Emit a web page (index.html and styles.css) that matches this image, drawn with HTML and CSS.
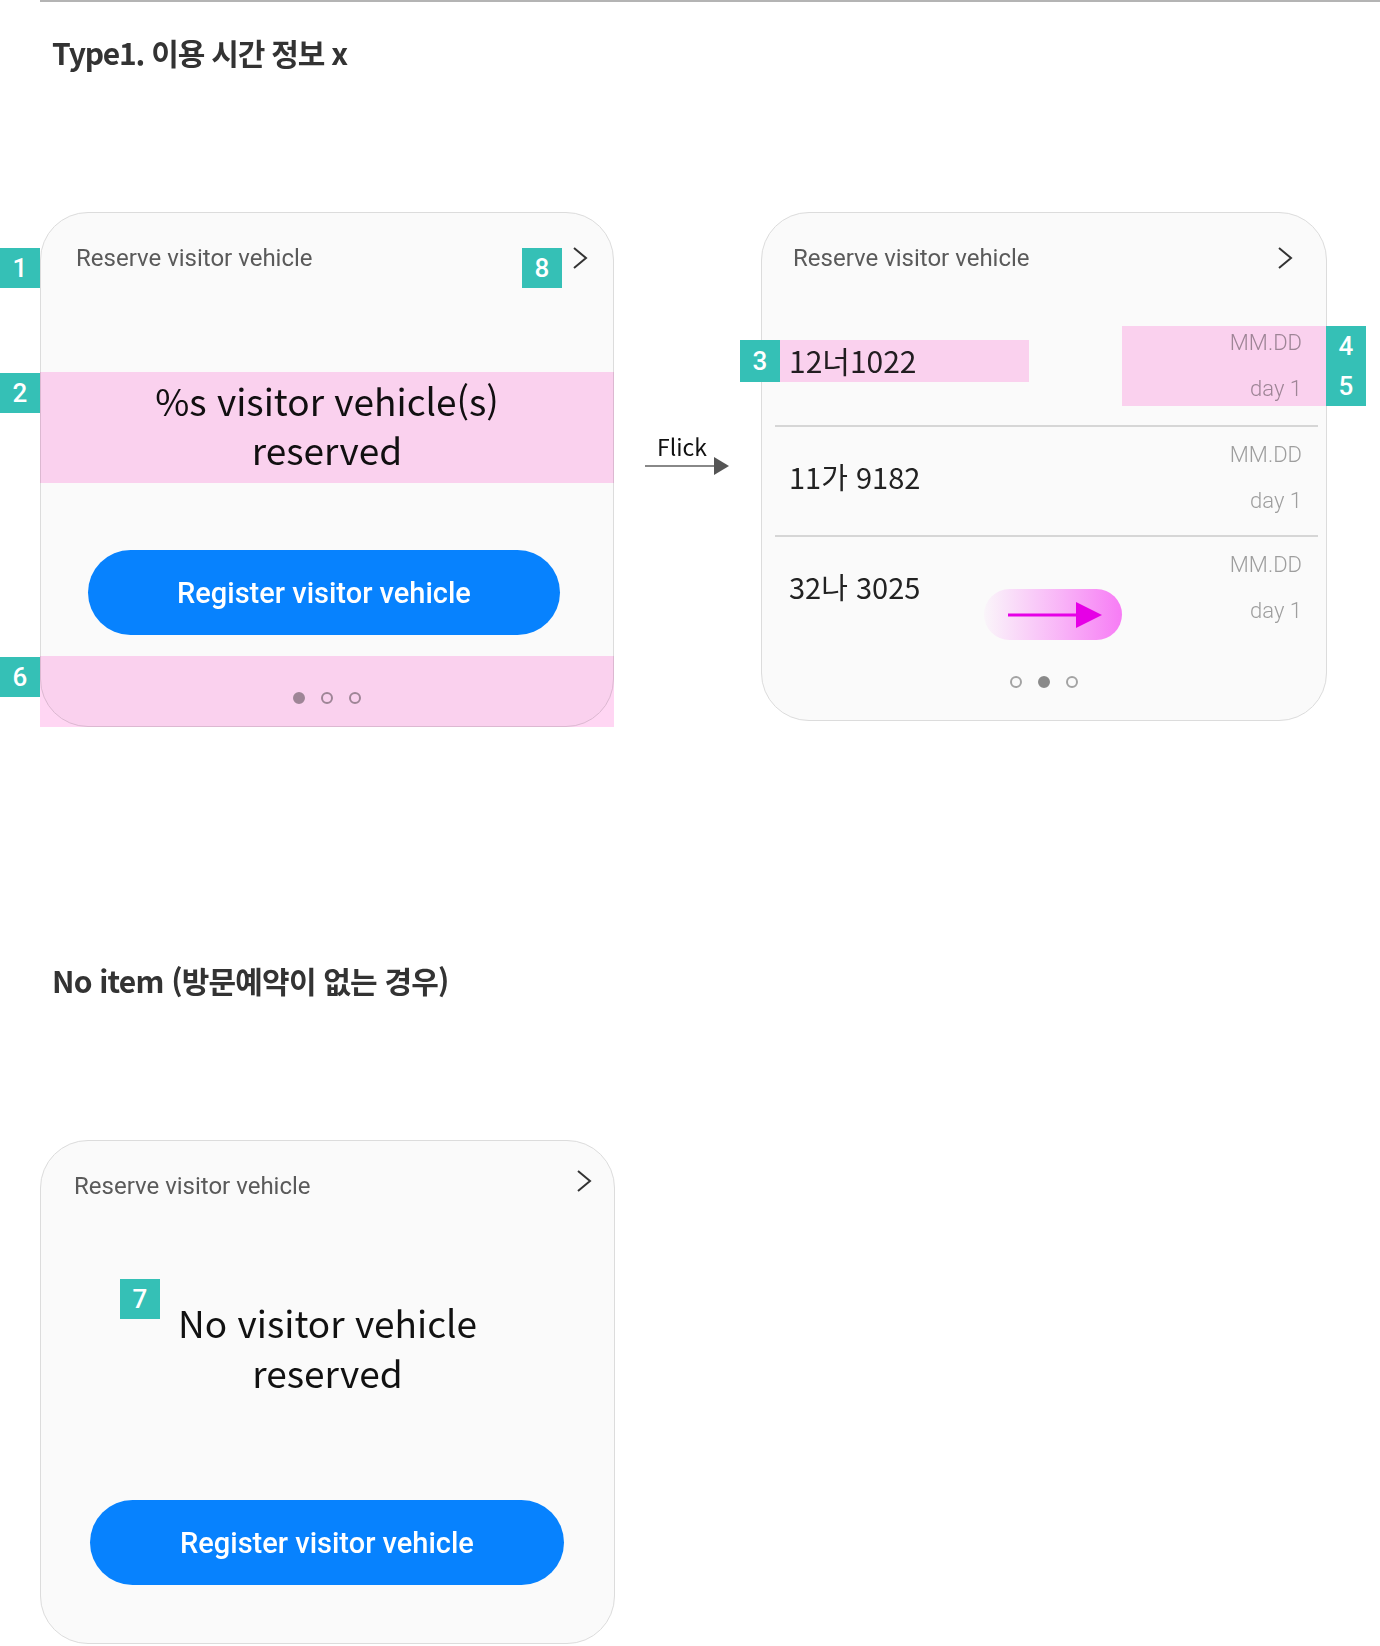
FILE: index.html
```html
<!DOCTYPE html>
<html lang="ko">
<head>
<meta charset="utf-8">
<title>Reserve visitor vehicle</title>
<link rel="stylesheet" href="styles.css">
</head>
<body>
<div class="rule"></div>
<h2 class="section-title">Type1. 이용 시간 정보 x</h2>

<div class="flow-row">
  <section class="card card-a">
    <header class="card-head head-a">
      <span class="card-title">Reserve visitor vehicle</span>
      <svg class="chev" width="16" height="24" viewBox="0 0 16 24"><polyline points="2,2 14,12 2,22" /></svg>
      <span class="badge b1">1</span>
      <span class="badge b8">8</span>
    </header>
    <div class="msg msg-a">
      <span class="mark mark-band"></span>
      <span class="badge b2">2</span>
      <span class="msg-line">%s visitor vehicle(s)</span>
      <span class="msg-line">reserved</span>
    </div>
    <button class="cta cta-a">Register visitor vehicle</button>
    <div class="pager pager-a">
      <span class="mark mark-foot"></span>
      <span class="badge b6">6</span>
      <span class="dot on"></span><span class="dot"></span><span class="dot"></span>
    </div>
  </section>

  <div class="flick">
    <span class="flick-label">Flick</span>
    <svg class="flick-arrow" width="84" height="20" viewBox="0 0 84 20"><line x1="0" y1="9" x2="70" y2="9" /><polygon points="69,0 84,9 69,18" /></svg>
  </div>

  <section class="card card-b">
    <header class="card-head head-b">
      <span class="card-title">Reserve visitor vehicle</span>
      <svg class="chev" width="16" height="24" viewBox="0 0 16 24"><polyline points="2,2 14,12 2,22" /></svg>
    </header>
    <div class="plates">
      <div class="plate-row first">
        <span class="mark mark-plate"></span>
        <span class="badge b3">3</span>
        <span class="mark mark-when"></span>
        <span class="badge b4">4</span>
        <span class="badge b5">5</span>
        <span class="plate">12너1022</span>
        <span class="when">MM.DD<br>day 1</span>
      </div>
      <div class="divider"></div>
      <div class="plate-row">
        <span class="plate">11가 9182</span>
        <span class="when">MM.DD<br>day 1</span>
      </div>
      <div class="divider"></div>
      <div class="plate-row">
        <span class="plate">32나 3025</span>
        <span class="swipe-hint">
          <svg width="138" height="51" viewBox="0 0 138 51"><line x1="24" y1="26" x2="94" y2="26" /><polygon points="92,13 118,26 92,39" /></svg>
        </span>
        <span class="when">MM.DD<br>day 1</span>
      </div>
    </div>
    <div class="pager pager-b">
      <span class="dot"></span><span class="dot on"></span><span class="dot"></span>
    </div>
  </section>
</div>

<h2 class="section-title title-empty">No item (방문예약이 없는 경우)</h2>

<section class="card card-c">
  <header class="card-head head-c">
    <span class="card-title">Reserve visitor vehicle</span>
    <svg class="chev chev-up" width="16" height="24" viewBox="0 0 16 24"><polyline points="2,2 14,12 2,22" /></svg>
  </header>
  <div class="msg msg-c">
    <span class="badge b7">7</span>
    <span class="msg-line">No visitor vehicle</span>
    <span class="msg-line">reserved</span>
  </div>
  <button class="cta cta-c">Register visitor vehicle</button>
</section>
</body>
</html>
```

FILE: styles.css
```css
* { box-sizing: border-box; }

body {
  margin: 0;
  width: 1380px;
  background: #ffffff;
  font-family: "Noto Sans CJK KR", "Noto Sans", sans-serif;
  color: #222;
}

.rule {
  margin-left: 40px;
  height: 2px;
  background: #b4b4b4;
}

.section-title {
  margin: 30px 0 0 52px;
  font-size: 30px;
  line-height: 40px;
  font-weight: 700;
  color: #333;
  letter-spacing: -1.2px;
}

.title-empty {
  margin-top: 233px;
  letter-spacing: -0.8px;
}

.flow-row {
  display: flex;
  align-items: flex-start;
  margin: 140px 0 0 40px;
}

.card {
  position: relative;
  background: #fafafa;
  border: 1px solid #dcdcdc;
  border-radius: 48px;
}

.card-a { width: 574px; }
.card-b { width: 566px; margin-left: 32px; }
.card-c { width: 575px; margin: 140px 0 0 40px; padding-bottom: 58px; }

.card-head {
  position: relative;
  height: 90px;
  display: flex;
  align-items: center;
}

.head-a { padding: 0 25px 0 35px; }
.head-b { padding: 0 33px 0 31px; }
.head-c { padding: 0 22px 0 33px; }

.card-title {
  font-family: Roboto, "Noto Sans", sans-serif;
  font-size: 24px;
  color: #5a5a5a;
}

.chev {
  margin-left: auto;
  fill: none;
  stroke: #333;
  stroke-width: 2;
}

.chev-up { margin-bottom: 10px; }

.badge {
  position: absolute;
  z-index: 2;
  width: 40px;
  height: 40px;
  display: flex;
  align-items: center;
  justify-content: center;
  background: #35c0b6;
  color: #fff;
  font-family: Roboto, "Noto Sans", sans-serif;
  font-size: 26px;
  font-weight: 500;
  line-height: 1;
}

.b1 { left: -41px; top: 35px; }
.b8 { left: 481px; top: 35px; }
.b2 { left: -41px; top: 1px; }
.b6 { left: -41px; top: 1px; }
.b3 { left: -22px; top: 25px; height: 42px; }
.b4 { left: 564px; top: 11px; }
.b5 { left: 564px; top: 51px; }
.b7 { left: 79px; top: -18px; }

.mark {
  position: absolute;
  z-index: 1;
  background: #ffd6f3;
  mix-blend-mode: multiply;
}

.mark-band { top: 0; bottom: 0; left: -1px; right: -1px; }
.mark-foot { top: 0; bottom: -1px; left: -1px; right: -1px; }
.mark-plate { left: 18px; top: 25px; width: 249px; height: 42px; }
.mark-when { left: 360px; top: 11px; width: 205px; height: 80px; }

.msg {
  position: relative;
  display: flex;
  flex-direction: column;
  align-items: center;
  font-size: 37px;
  color: #111;
}

.msg-line { display: block; }

.msg-a {
  margin-top: 69px;
  height: 111px;
  padding-top: 4px;
  line-height: 49px;
}

.msg-c {
  margin-top: 66px;
  line-height: 50px;
}

.cta {
  display: block;
  height: 85px;
  border: none;
  border-radius: 43px;
  background: #0782fe;
  color: #fff;
  font-family: Roboto, "Noto Sans", sans-serif;
  font-size: 29px;
  font-weight: 500;
  padding: 0;
}

.cta-a { width: 472px; margin: 67px 0 0 47px; }
.cta-c { width: 474px; margin: 103px 0 0 49px; }

.pager {
  position: relative;
  display: flex;
  justify-content: center;
  gap: 16px;
}

.pager-a { margin-top: 21px; height: 70px; padding-top: 36px; }
.pager-b { height: 75px; padding-top: 31px; }

.dot {
  width: 12px;
  height: 12px;
  border-radius: 50%;
  border: 2px solid #9e9e9e;
}

.dot.on { background: #9e9e9e; }
.pager-b .dot { border-color: #a3a3a3; }
.pager-b .dot.on { background: #8a8a8a; border-color: #8a8a8a; }

.flick {
  display: flex;
  flex-direction: column;
  width: 84px;
  margin: 222px 0 0 31px;
}

.flick-label {
  padding-left: 12px;
  font-size: 23px;
  line-height: 24px;
  color: #111;
}

.flick-arrow { margin-top: -1px; }
.flick-arrow line { stroke: #888; stroke-width: 2; }
.flick-arrow polygon { fill: #555; }

.plates { padding-top: 12px; }

.plate-row {
  position: relative;
  height: 108px;
  display: flex;
  justify-content: space-between;
  align-items: flex-start;
  padding: 0 24px 0 27px;
}

.plate-row.first { height: 110px; }

.plate {
  padding-top: 29px;
  font-size: 29px;
  line-height: 40px;
  color: #222;
}

.first .plate { padding-top: 25px; font-size: 30px; }

.when {
  padding-top: 5px;
  text-align: right;
  font-family: Roboto, "Noto Sans", sans-serif;
  font-weight: 300;
  font-size: 22px;
  line-height: 46px;
  color: #9e9e9e;
}

.divider {
  height: 2px;
  margin: 0 8px 0 13px;
  background: #d6d6d6;
}

.swipe-hint {
  position: absolute;
  left: 222px;
  top: 52px;
  width: 138px;
  height: 51px;
  border-radius: 26px;
  background: linear-gradient(to right, rgba(247, 124, 245, 0.04) 0%, rgba(247, 124, 245, 0.55) 55%, #f77cf5 100%);
}

.swipe-hint svg { display: block; }
.swipe-hint line { stroke: #e600e6; stroke-width: 3; }
.swipe-hint polygon { fill: #e600e6; }
```
